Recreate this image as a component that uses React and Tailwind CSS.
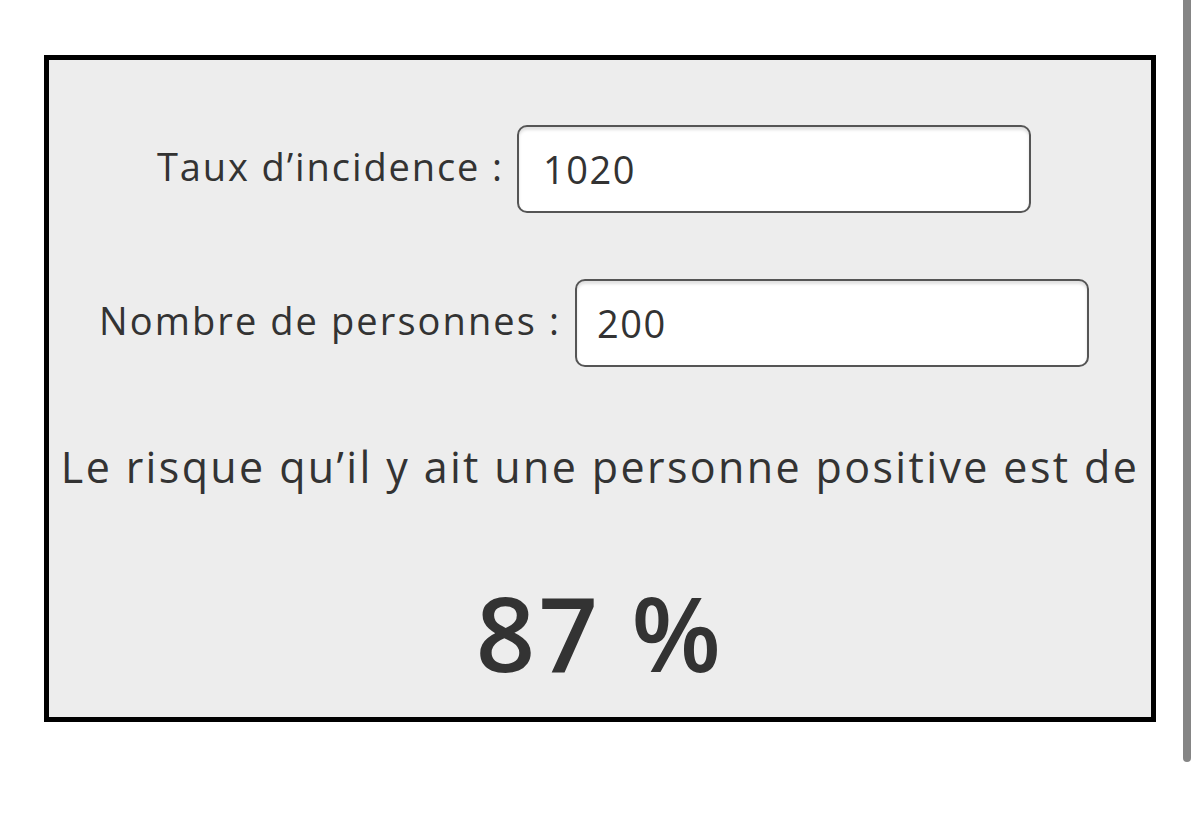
import React, { useState } from "react";

export default function App() {
    const [taux, setTaux] = useState("1020");
    const [nombre, setNombre] = useState("200");

    const t = parseFloat(taux) || 0;
    const n = parseFloat(nombre) || 0;
    const risque = Math.round((1 - Math.pow(1 - t / 100000, n)) * 100);

    return (
        <div className="relative min-h-[820px] w-[1200px] bg-white text-[#333] font-['Open_Sans',sans-serif]">
            {/* barre de défilement */}
            <div className="absolute left-[1183px] top-0 h-[762px] w-[8px] rounded-b-full bg-[#858585]" />

            <div className="pl-[44px] pt-[55px]">
                <div className="flex h-[667px] w-[1112px] flex-col items-center border-[5px] border-black bg-[#ededed] pt-[65px]">
                    <div className="flex items-center gap-[13px] pr-[12px]">
                        <label className="-mt-[6px] text-[38px] leading-none tracking-[0.05em]">Taux d’incidence :</label>
                        <input
                            value={taux}
                            onChange={(e) => setTaux(e.target.value)}
                            className="h-[88px] w-[514px] rounded-[10px] border-2 border-[#555] bg-white px-[24px] text-[38px] tracking-[0.04em] text-[#333] shadow-[inset_0_3px_3px_rgba(0,0,0,0.12)] outline-none"
                        />
                    </div>
                    <div className="mt-[66px] flex items-center gap-[14px] pr-[12px]">
                        <label className="-mt-[6px] text-[38px] leading-none tracking-[0.055em]">Nombre de personnes :</label>
                        <input
                            value={nombre}
                            onChange={(e) => setNombre(e.target.value)}
                            className="h-[88px] w-[514px] rounded-[10px] border-2 border-[#555] bg-white px-[20px] text-[38px] tracking-[0.04em] text-[#333] shadow-[inset_0_3px_3px_rgba(0,0,0,0.12)] outline-none"
                        />
                    </div>
                    <p className="mt-[78px] text-[43px] leading-none tracking-[0.055em]">
                        Le risque qu’il y ait une personne positive est de
                    </p>
                    <p className="mt-[92px] text-[104px] font-semibold leading-none tracking-[0.03em]">{risque} %</p>
                </div>
            </div>
        </div>
    );
}
